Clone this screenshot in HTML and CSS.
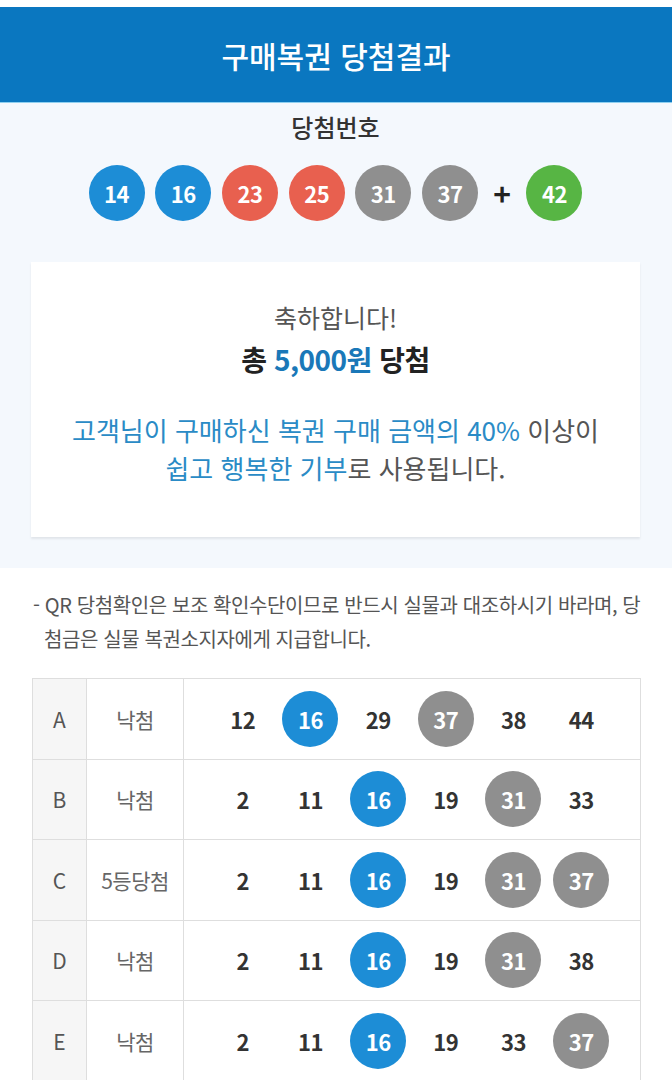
FILE: index.html
```html
<!DOCTYPE html>
<html lang="ko">
<head>
<meta charset="utf-8">
<title>구매복권 당첨결과</title>
<link rel="stylesheet" href="styles.css">
</head>
<body>
<header class="top">
  <h1 class="top-title">구매복권 당첨결과</h1>
</header>
<section class="win">
  <h2 class="win-title">당첨번호</h2>
  <div class="win-balls">
    <span class="ball blue">14</span>
    <span class="ball blue">16</span>
    <span class="ball red">23</span>
    <span class="ball red">25</span>
    <span class="ball gray">31</span>
    <span class="ball gray">37</span>
    <span class="plus">+</span>
    <span class="ball green">42</span>
  </div>
  <div class="card">
    <p class="congrats">축하합니다!</p>
    <p class="total">총 <span class="amount">5,000원</span> 당첨</p>
    <p class="donate"><span class="hl">고객님이 구매하신 복권 구매 금액의 40%</span> 이상이<br><span class="hl">쉽고 행복한 기부</span>로 사용됩니다.</p>
  </div>
</section>
<p class="note">- QR 당첨확인은 보조 확인수단이므로 반드시 실물과 대조하시기 바라며, 당첨금은 실물 복권소지자에게 지급합니다.</p>
<table class="games">
  <tr>
    <td class="g-id">A</td><td class="g-res">낙첨</td>
    <td class="g-nums"><div class="nums"><span class="num">12</span><span class="num ball blue">16</span><span class="num">29</span><span class="num ball gray">37</span><span class="num">38</span><span class="num">44</span></div></td>
  </tr>
  <tr>
    <td class="g-id">B</td><td class="g-res">낙첨</td>
    <td class="g-nums"><div class="nums"><span class="num">2</span><span class="num">11</span><span class="num ball blue">16</span><span class="num">19</span><span class="num ball gray">31</span><span class="num">33</span></div></td>
  </tr>
  <tr>
    <td class="g-id">C</td><td class="g-res">5등당첨</td>
    <td class="g-nums"><div class="nums"><span class="num">2</span><span class="num">11</span><span class="num ball blue">16</span><span class="num">19</span><span class="num ball gray">31</span><span class="num ball gray">37</span></div></td>
  </tr>
  <tr>
    <td class="g-id">D</td><td class="g-res">낙첨</td>
    <td class="g-nums"><div class="nums"><span class="num">2</span><span class="num">11</span><span class="num ball blue">16</span><span class="num">19</span><span class="num ball gray">31</span><span class="num">38</span></div></td>
  </tr>
  <tr>
    <td class="g-id">E</td><td class="g-res">낙첨</td>
    <td class="g-nums"><div class="nums"><span class="num">2</span><span class="num">11</span><span class="num ball blue">16</span><span class="num">19</span><span class="num">33</span><span class="num ball gray">37</span></div></td>
  </tr>
</table>
</body>
</html>
```
FILE: styles.css
```css
* { box-sizing: border-box; }
html, body { margin: 0; padding: 0; background: #ffffff; }
body {
  font-family: "Noto Sans CJK KR", "Noto Sans", sans-serif;
  color: #333;
  padding-top: 7px;
}
.top {
  background: #0a77c0;
  height: 96px;
  display: flex;
  align-items: center;
  justify-content: center;
  border-bottom: 1px solid #8fd0f0;
}
.top-title {
  margin: 0;
  color: #ffffff;
  font-size: 30px;
  font-weight: 500;
  letter-spacing: 0;
  line-height: 1;
}
.win {
  background: #f4f8fd;
  padding: 8px 32px 31px 31px;
}
.win-title {
  margin: 0;
  text-align: center;
  font-size: 24px;
  font-weight: 500;
  line-height: 32px;
  color: #333;
}
.win-balls {
  margin-top: 22px;
  display: flex;
  justify-content: center;
  align-items: center;
  gap: 10.7px;
}
.ball {
  width: 56px;
  height: 56px;
  border-radius: 50%;
  display: inline-flex;
  align-items: center;
  justify-content: center;
  color: #fff;
  font-size: 22px;
  font-weight: 700;
  letter-spacing: -0.5px;
}
.blue { background: #1d8dd6; }
.red { background: #e8604f; }
.gray { background: #8f8f8f; }
.green { background: #57b544; }
.plus {
  width: 27px;
  text-align: center;
  font-size: 30px;
  font-weight: 700;
  color: #222;
  line-height: 1;
}
.card {
  margin-top: 41px;
  background: #ffffff;
  box-shadow: 0 2px 2px rgba(0, 0, 0, 0.08);
  padding: 38px 10px 50px;
  text-align: center;
}
.card p { margin: 0; }
.congrats {
  font-size: 25px;
  line-height: 34px;
  color: #555;
}
.total {
  margin-top: 8px !important;
  font-size: 28px;
  font-weight: 700;
  line-height: 34px;
  color: #222;
  letter-spacing: -0.5px;
}
.amount { color: #1a78b8; }
.donate {
  margin-top: 35px !important;
  font-size: 26px;
  line-height: 38px;
  color: #555;
  letter-spacing: 0;
}
.hl { color: #2a8bc6; }
.note {
  margin: 20px 30px 22px 0;
  padding-left: 44px;
  text-indent: -11px;
  font-size: 20px;
  line-height: 34px;
  color: #555;
  letter-spacing: -0.4px;
}
.games {
  margin-left: 32px;
  width: 609px;
  border-collapse: collapse;
  background: #fff;
}
.games td {
  border: 1px solid #dedede;
  height: 80.5px;
  padding: 0;
  text-align: center;
  vertical-align: middle;
}
.g-id {
  width: 54px;
  background: #f6f6f6;
  font-size: 21px;
  color: #555;
}
.g-res {
  width: 97px;
  font-size: 21px;
  color: #666;
  letter-spacing: -0.5px;
}
.nums {
  display: grid;
  grid-template-columns: repeat(6, 1fr);
  padding: 0 25px;
  justify-items: center;
  align-items: center;
}
.num {
  font-size: 22px;
  font-weight: 700;
  color: #333;
  letter-spacing: -0.5px;
}
.num.ball { color: #fff; }
```
